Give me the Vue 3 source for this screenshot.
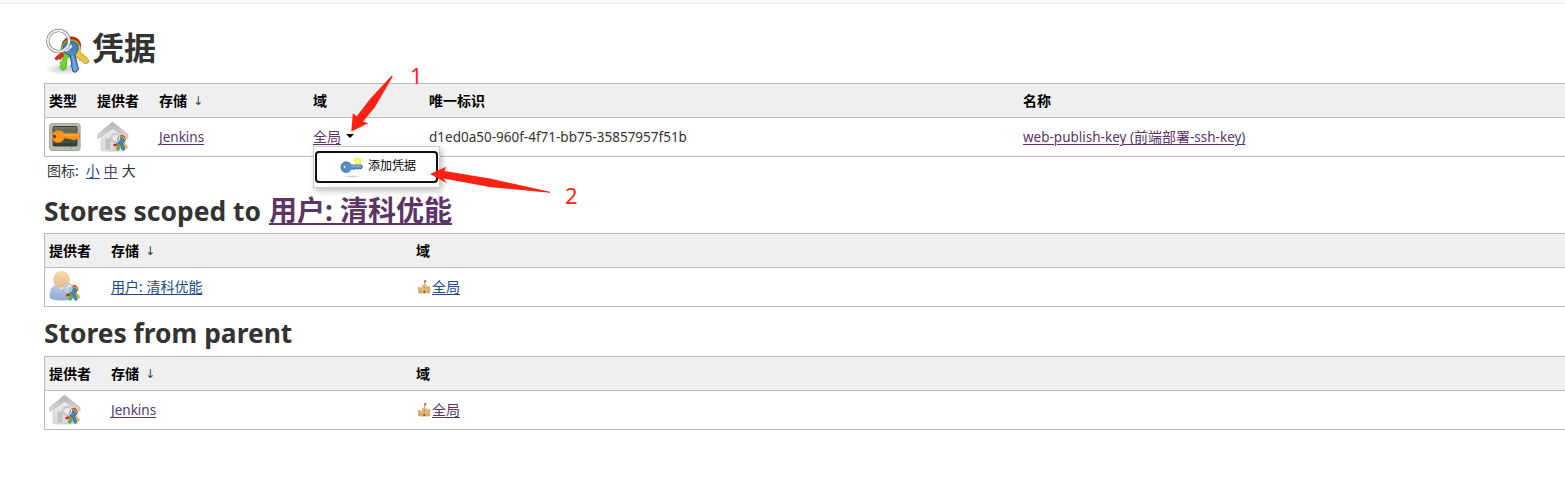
<script setup>
const stores = [
  { id: 'user', title: 'Stores scoped to', owner: '用户: 清科优能', name: '用户: 清科优能', icon: '#person', visited: false },
  { id: 'parent', title: 'Stores from parent', owner: '', name: 'Jenkins', icon: '#house', visited: true },
]
</script>

<template>
  <svg class="defs" width="0" height="0">
    <defs>
      <linearGradient id="roof" x1="0" y1="0" x2="0" y2="1">
        <stop offset="0" stop-color="#b2b2b2" /><stop offset="1" stop-color="#dcdcdc" />
      </linearGradient>
      <linearGradient id="wall" x1="0" y1="0" x2="0" y2="1">
        <stop offset="0" stop-color="#eeeeee" /><stop offset="1" stop-color="#d8d8d8" />
      </linearGradient>
      <linearGradient id="blueKey" x1="0" y1="0" x2="0" y2="1">
        <stop offset="0" stop-color="#4479bd" /><stop offset="1" stop-color="#6b9bd6" />
      </linearGradient>
      <linearGradient id="screen" x1="0" y1="0" x2="0" y2="1">
        <stop offset="0" stop-color="#6c7a67" /><stop offset="1" stop-color="#303d2e" />
      </linearGradient>
      <linearGradient id="skin" x1="0" y1="0" x2="0" y2="1">
        <stop offset="0" stop-color="#f6dcb2" /><stop offset="1" stop-color="#e4bd86" />
      </linearGradient>
      <linearGradient id="shirt" x1="0" y1="0" x2="0" y2="1">
        <stop offset="0" stop-color="#b9cce6" /><stop offset="1" stop-color="#8fabd0" />
      </linearGradient>
      <radialGradient id="shade">
        <stop offset="0" stop-color="#000" stop-opacity=".22" /><stop offset="1" stop-color="#000" stop-opacity="0" />
      </radialGradient>
    </defs>

    <symbol id="keys" viewBox="0 0 48 48">
      <path d="M19 24l4 4-5 2-1.500 2.500-2-.8-2.500 1.300-1-2z" fill="#dd2a22" stroke="#a41512" stroke-width=".8" />
      <path d="M32 21l12.500 11.500-.5 3.500-4 .5-2.500-3-2 .2-1-2.600-2-.5-4-5z" fill="#eac545" stroke="#b68b15" stroke-width=".8" />
      <path d="M17.500 18c2-10 16-12 19.500-1l-.5 6-4 1-13 1z" fill="#c91e1e" />
      <path d="M18 20c2-9 14-11 18-1l1 6-5 2-12-2z" fill="#e8c03c" />
      <path d="M17 22c1-10 13-13 17.500-4l-6.500 11-5 2-1 10.500-3.500 2-2.500-3 1-3-.8-2 2-2 2-6q-2.500-2-3.200-5.500z" fill="#72d32c" stroke="#44a414" stroke-width=".8" />
      <path d="M26.500 14.500c5 0 8 3.500 7.500 7.500 0 2-1.500 4-3 5.500l3.500 15-3 3-3-1.500-.2-3-1.500-1.500 1-2.500-2-9c-4-.5-6.500-3-6.500-7 0-4 3-6.500 7.200-6.500z" fill="url(#blueKey)" stroke="#24528f" />
      <path d="M28.500 29l3 13" stroke="#8fb5e4" fill="none" />
      <ellipse cx="25.500" cy="19.500" rx="2.700" ry="2" fill="#e5e8ea" />
      <circle cx="14.500" cy="14" r="10.600" fill="none" stroke="#777" stroke-width="3.300" />
      <circle cx="14.500" cy="14" r="10.600" fill="none" stroke="#ededed" stroke-width="2" />
      <path d="M20 23q4 2 6-3" fill="none" stroke="#e0e0e0" stroke-width="1.800" />
    </symbol>

    <symbol id="smallkeys" viewBox="0 0 20 20">
      <path d="M8 11l-4 1.500 1 2 4-1z" fill="#d82722" />
      <path d="M13 9l5.500 5.500-1 2-3-1.500z" fill="#e4b93c" stroke="#a98122" stroke-width=".4" />
      <path d="M8.500 7C9.500 2 16 1 17 8l-3 3z" fill="#c8372d" />
      <path d="M8.500 8c1-5 7-5 7.800 0l-3 3z" fill="#e1c03b" />
      <path d="M8 9c1-5 6.500-5 7.500 0l-4 4L10 18l-2 .5-.7-2L9 12.500z" fill="#57bd28" stroke="#338e18" stroke-width=".4" />
      <path d="M11.500 6c2.500 0 3.800 1.700 3.300 3.500l-1.100 2 2.300 5.800-1.700 1.400-2-1.800-.8-5C9 11.500 8 10 8.500 8.500c.2-1.500 1.500-2.500 3-2.500z" fill="#4785cb" stroke="#28588f" stroke-width=".5" />
      <circle cx="6.300" cy="6" r="4.200" fill="#fff" fill-opacity=".25" stroke="#999" stroke-width="1.700" />
      <circle cx="6.300" cy="6" r="4.200" fill="none" stroke="#f2f2f2" stroke-width="1" />
    </symbol>

    <symbol id="house" viewBox="0 0 32 32">
      <ellipse cx="15" cy="29.500" rx="15" ry="2" fill="url(#shade)" />
      <path d="M4 14L15.500 4 28 14v15H4z" fill="url(#wall)" stroke="#c8c8c8" stroke-width=".6" />
      <path d="M8 17h6v12H8z" fill="#c2c2c2" stroke="#e9e9e9" stroke-width=".6" />
      <path d="M15.500 1L.8 13.500v4L15.500 7.500 31 17.500v-4z" fill="url(#roof)" stroke="#adadad" stroke-width=".6" />
      <use href="#smallkeys" x="12" y="11" width="20" height="20" />
    </symbol>

    <symbol id="person" viewBox="0 0 32 32">
      <path d="M1 27c-.5-8 2-13 8-13h6c6 0 9 5 9 13-4 3-19 3-23 0z" fill="url(#shirt)" stroke="#8eabd0" stroke-width=".5" />
      <path d="M8 14l4 5 4-5z" fill="#e8eef5" />
      <circle cx="12.500" cy="8.500" r="8" fill="url(#skin)" stroke="#e0bd8a" stroke-width=".5" />
      <use href="#smallkeys" x="12.500" y="11" width="20" height="20" />
    </symbol>

    <symbol id="terminal" viewBox="0 0 32 32">
      <rect x=".6" y="2.500" width="30.500" height="27" rx="2.500" fill="#b9bbb8" stroke="#a0a29f" />
      <rect x="4" y="5.500" width="24" height="19.500" rx="1" fill="url(#screen)" stroke="#3a4238" />
      <path d="M5 9h22M5 21.500h22" stroke="#51604d" stroke-width=".6" />
      <path d="M7.500 9.800c4-.8 6.500.7 7.500 2.500h15.500v5l-2 1.500-1.500-1-2 1.500-3-1.500-2 .4-1-1h-4c-1 3.500-4 5-8 4-5.500-1.500-5.500-9.900.5-11.400z" fill="#ff9421" stroke="#e07a14" stroke-width=".6" />
      <path d="M4 14.200q3-1.300 3.200 1.200T4 16.800z" fill="#6d3c12" />
      <path d="M15 14.200h14" stroke="#ffb055" />
      <path d="M21 27h2" stroke="#60c937" stroke-width="1.200" />
    </symbol>

    <symbol id="castle" viewBox="0 0 14 16">
      <path d="M7.700 1.500v5" stroke="#8a7d6e" stroke-width=".7" />
      <path d="M7.300 1.200l2.500.5-2 2z" fill="#e9242b" />
      <path d="M1.500 8.500h1.700v1.500h2V7l2.300-1.800L9.700 7v3h1V7.800h2V14h-11z" fill="#e8bd75" stroke="#cc9a55" stroke-width=".7" />
      <path d="M6.300 14v-2q1-1.300 2 0v2z" fill="#94612c" />
      <path d="M3.300 11.500v1.200M11 11.500v1.200M7.300 8v1.200" stroke="#956b35" />
    </symbol>

    <symbol id="addkey" viewBox="0 0 24 28">
      <ellipse cx="12" cy="24.500" rx="10" ry="1.400" fill="url(#shade)" />
      <circle cx="17.800" cy="9" r="2.500" fill="#fffcae" stroke="#fbf04d" stroke-width="2.200" />
      <path d="M6 10c3 0 4.500 1.500 5.200 3h10.300l1 1.700-1.500 2.300-1.500-.6-1.300.7-1.500-.7-1.300.7h-4.200c-.8 2-2.700 3.200-5.500 3.200C-.5 20.300-.5 10 6 10z" fill="#5e8ec8" stroke="#31659f" stroke-width=".9" />
      <circle cx="4.500" cy="15" r="1.400" fill="#fff" stroke="#31659f" stroke-width=".6" />
      <path d="M11.500 14.200h9.500" stroke="#9dbde3" />
    </symbol>
  </svg>

  <div class="page">
    <div class="topbar"></div>
    <main>
      <h1><svg class="bigkeys" width="48" height="48"><ellipse cx="20" cy="42" rx="20" ry="6" fill="url(#shade)" /><use href="#keys" width="48" height="48" /></svg><span>凭据</span></h1>

      <section class="table wide">
        <div class="row head">
          <span>类型</span><span>提供者</span><span class="sorted">存储<i>↓</i></span><span>域</span><span>唯一标识</span><span>名称</span>
        </div>
        <div class="row">
          <svg width="32" height="32"><use href="#terminal" /></svg>
          <svg width="32" height="32"><use href="#house" /></svg>
          <span><a class="visited latin">Jenkins</a></span>
          <div class="domain">
            <a class="visited">全局</a><b class="caret"></b>
            <div class="menu">
              <button><svg width="24" height="28"><use href="#addkey" /></svg><span>添加凭据</span></button>
            </div>
          </div>
          <span class="latin">d1ed0a50-960f-4f71-bb75-35857957f51b</span>
          <span><a class="visited latin">web-publish-key (<span class="han">前端部署</span>-ssh-key)</a></span>
        </div>
      </section>

      <div class="sizes"><span>图标:</span><a>小</a><a class="visited">中</a><span>大</span></div>

      <template v-for="s in stores" :key="s.id">
        <h2 :class="s.id"><span>{{ s.title }}</span><a v-if="s.owner" class="visited">{{ s.owner }}</a></h2>
        <section class="table">
          <div class="row head"><span>提供者</span><span class="sorted">存储<i>↓</i></span><span>域</span></div>
          <div class="row">
            <svg width="32" height="32"><use :href="s.icon" /></svg>
            <span><a :class="{ visited: s.visited, latin: s.visited }">{{ s.name }}</a></span>
            <span class="scope"><svg width="14" height="16"><use href="#castle" /></svg><a :class="{ visited: s.visited }">全局</a></span>
          </div>
        </section>
      </template>
    </main>

    <svg class="notes" width="1565" height="482">
      <g fill="#ff2114">
        <path d="M392.700 76L362.700 121.500 368.300 123.300 351.300 131.500 352.800 113.300 357 116.500 391.500 76z" />
        <path d="M392.700 76.500L375 107 362.700 122 357 116 370 99 391.500 75.700z" />
        <path d="M430 174L446 166.700 444.500 171 490 178.500 550 191.700V192.700L490 187 443.500 178.500 446.700 183.300z" />
        <text x="410" y="84">1</text>
        <text x="565" y="204">2</text>
      </g>
    </svg>
  </div>
</template>

<style>
body { margin: 0; background: #fff; overflow: hidden; }
</style>

<style scoped>
.defs { position: absolute; }
.page {
  position: relative; height: 482px; overflow: hidden; color: #333;
  font: 14px/20px "Noto Sans", "Noto Sans CJK SC", sans-serif;
}
.topbar { height: 3px; background: #f8f8f8; border-bottom: 1px solid #e8e8e8; }
main { padding-left: 44px; }
h1 { margin: 0; height: 79px; display: flex; align-items: flex-start; font-size: 32px; line-height: 44px; }
h1 span { margin-top: 22px; }
.bigkeys { margin-top: 23px; }
a { color: #204a87; text-decoration: underline; text-underline-offset: 2px; text-decoration-thickness: 1px; }
a.visited { color: #5c3566; }
.latin { font-size: 13.5px; }
.han { font-size: 14px; }
.table { border: 1px solid #bbb; border-right: 0; box-sizing: border-box; height: 74px; }
.row { display: grid; grid-template-columns: 62px 305px 1fr; align-items: center; height: 38px; padding-left: 4px; white-space: nowrap; }
.wide .row { grid-template-columns: 48px 62px 154px 116px 594px 1fr; }
.row.head { height: 33px; background: #efefef; border-bottom: 1px solid #bbb; color: #000; font-weight: 700; }
.sorted { display: flex; align-items: center; gap: 6px; }
.sorted i { font: 12px/20px "DejaVu Sans", sans-serif; color: #204a57; }
.row svg { display: block; }
.domain { position: relative; display: flex; align-items: center; }
.caret { border: 4px solid transparent; border-top-color: #000; border-bottom: 0; margin: -2px 0 0 5px; }
.menu {
  position: absolute; left: 0; top: 19px; width: 127px; height: 42px; box-sizing: border-box;
  padding: 4px 1px; border: 1px solid #ccc; background: #fff; box-shadow: 2px 3px 6px rgba(0, 0, 0, .25);
}
.menu button {
  width: 123px; height: 32px; box-sizing: border-box; display: flex; align-items: center; padding: 0 0 0 23px; gap: 4px;
  border: 2px solid #101010; border-radius: 4px; background: #fff; color: #000; font: 12px/18px "Noto Sans", "Noto Sans CJK SC", sans-serif;
}
.menu button svg { margin-top: -2px; }
.menu button span { margin-top: -2px; }
.sizes { display: flex; gap: 4px; padding-left: 3px; height: 20px; margin-top: 4px; }
.sizes span:first-child { margin-right: 3px; }
h2 { margin: 0; font-size: 28px; line-height: 38px; display: flex; align-items: baseline; white-space: nowrap; }
h2 span { font-size: 26.4px; }
h2.user { height: 42px; margin-top: 10px; gap: 8px; }
h2.user a { text-decoration-thickness: 2px; }
h2.parent { height: 42px; margin-top: 7px; }
.scope { display: flex; align-items: center; gap: 1px; padding-left: 1px; }
.notes { position: absolute; left: 0; top: 0; pointer-events: none; }
.notes text { font: 22px "Noto Sans", sans-serif; }
</style>
